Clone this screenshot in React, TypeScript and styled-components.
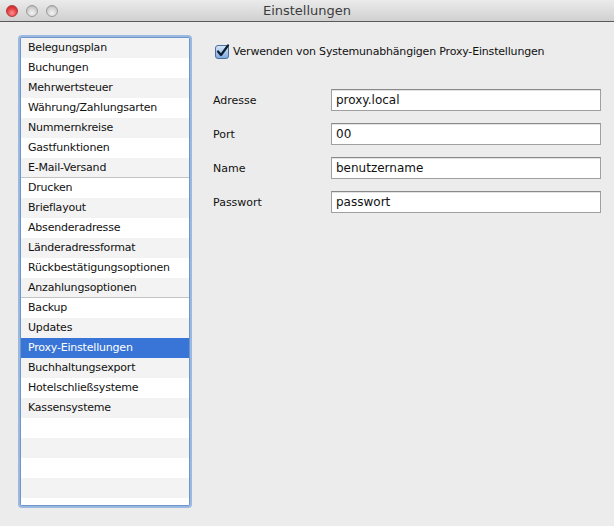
import React from "react";
import styled, { createGlobalStyle } from "styled-components";

const GlobalStyle = createGlobalStyle`
  html, body {
    margin: 0;
    padding: 0;
    background: #ececec;
    font-family: "DejaVu Sans", "Liberation Sans", sans-serif;
  }
  * { box-sizing: border-box; }
`;

const Window = styled.div`
  width: 614px;
  height: 526px;
  display: flex;
  flex-direction: column;
  background: #ececec;
  overflow: hidden;
`;

const TitleBar = styled.div`
  height: 22px;
  flex: none;
  display: grid;
  grid-template-columns: 1fr auto 1fr;
  align-items: center;
  background: linear-gradient(#ebebeb, #d0d0d0);
  border-bottom: 1px solid #5a5a5a;
`;

const Lights = styled.div`
  display: flex;
  gap: 8px;
  padding-left: 6px;
`;

const Light = styled.span<{ $red?: boolean }>`
  width: 12px;
  height: 12px;
  border-radius: 50%;
  border: 1px solid ${(p) => (p.$red ? "#b23a3a" : "#9b9b9b")};
  background: ${(p) =>
    p.$red
      ? "radial-gradient(circle at 50% 70%, #ff8f8f, #e0383a 60%, #b02a2a)"
      : "radial-gradient(circle at 50% 70%, #f4f4f4, #cfcfcf 60%, #a9a9a9)"};
`;

const Title = styled.div`
  font-size: 13px;
  color: #3c3c3c;
`;

const Body = styled.div`
  flex: 1;
  display: flex;
  padding: 15px 0 0 20px;
`;

const List = styled.div`
  width: 170px;
  height: 469px;
  border: 1px solid #6f95cc;
  box-shadow: 0 0 0 2px rgba(134, 172, 222, 0.8);
  border-radius: 2px;
  background: #fff;
  overflow: hidden;
`;

const Row = styled.div<{ $odd: boolean; $active?: boolean; $sep?: boolean }>`
  height: 20px;
  line-height: 20px;
  padding-left: 7px;
  font-size: 11px;
  letter-spacing: -0.2px;
  white-space: nowrap;
  color: ${(p) => (p.$active ? "#fff" : "#111")};
  background: ${(p) => (p.$active ? "#3875d7" : p.$odd ? "#fff" : "#f3f3f3")};
  border-bottom: ${(p) => (p.$sep ? "1px solid #c4c4c4" : "none")};
`;

const Panel = styled.div`
  margin-left: 23px;
  padding-top: 7px;
  display: flex;
  flex-direction: column;
`;

const CheckRow = styled.label`
  display: flex;
  align-items: center;
  gap: 3px;
  padding-left: 2px;
  font-size: 11px;
  letter-spacing: -0.18px;
  color: #111;
`;

const Form = styled.div`
  margin-top: 30px;
  display: grid;
  grid-template-columns: 118px 270px;
  row-gap: 12px;
  align-items: center;
`;

const Label = styled.div`
  font-size: 11px;
  color: #111;
`;

const Field = styled.div`
  height: 22px;
  border: 1px solid #a0a0a0;
  border-top-color: #8a8a8a;
  background: #fff;
  box-shadow: inset 0 1px 0 #e2e2e2;
  font-size: 12px;
  line-height: 20px;
  padding-left: 4px;
  color: #111;
`;

const items = [
  "Belegungsplan",
  "Buchungen",
  "Mehrwertsteuer",
  "Währung/Zahlungsarten",
  "Nummernkreise",
  "Gastfunktionen",
  "E-Mail-Versand",
  "Drucken",
  "Brieflayout",
  "Absenderadresse",
  "Länderadressformat",
  "Rückbestätigungsoptionen",
  "Anzahlungsoptionen",
  "Backup",
  "Updates",
  "Proxy-Einstellungen",
  "Buchhaltungsexport",
  "Hotelschließsysteme",
  "Kassensysteme",
  "",
  "",
  "",
  "",
  "",
];

const separators = [6, 12];

const fields = [
  { label: "Adresse", value: "proxy.local" },
  { label: "Port", value: "00" },
  { label: "Name", value: "benutzername" },
  { label: "Passwort", value: "passwort" },
];

const CheckIcon = () => (
  <svg width="15" height="15" viewBox="0 0 15 15">
    <defs>
      <linearGradient id="cb" x1="0" y1="0" x2="0" y2="1">
        <stop offset="0" stopColor="#d9e7f7" />
        <stop offset="1" stopColor="#7ea9dc" />
      </linearGradient>
    </defs>
    <rect x="0.5" y="1.5" width="13" height="13" rx="2.5" fill="url(#cb)" stroke="#4a6f9e" />
    <path d="M3 7.5 L6 11 L13 1.5" fill="none" stroke="#0d1d33" strokeWidth="2.2" strokeLinecap="round" strokeLinejoin="round" />
  </svg>
);

export default function App() {
  return (
    <Window>
      <GlobalStyle />
      <TitleBar>
        <Lights>
          <Light $red />
          <Light />
          <Light />
        </Lights>
        <Title>Einstellungen</Title>
        <div />
      </TitleBar>
      <Body>
        <List>
          {items.map((name, i) => (
            <Row
              key={i}
              $odd={i % 2 === 1}
              $active={name === "Proxy-Einstellungen"}
              $sep={separators.includes(i)}
            >
              {name}
            </Row>
          ))}
        </List>
        <Panel>
          <CheckRow>
            <CheckIcon />
            Verwenden von Systemunabhängigen Proxy-Einstellungen
          </CheckRow>
          <Form>
            {fields.map((f) => (
              <React.Fragment key={f.label}>
                <Label>{f.label}</Label>
                <Field>{f.value}</Field>
              </React.Fragment>
            ))}
          </Form>
        </Panel>
      </Body>
    </Window>
  );
}
